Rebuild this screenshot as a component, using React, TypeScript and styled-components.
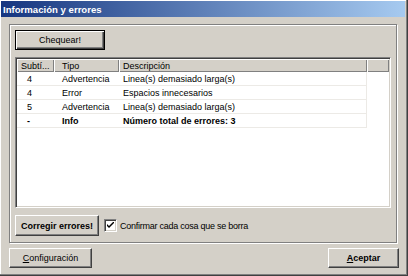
import React from 'react';
import styled, { createGlobalStyle } from 'styled-components';

const Global = createGlobalStyle`
  html, body { margin: 0; padding: 0; background: #d4d0c8; }
  body { font-family: "Liberation Sans", Arial, sans-serif; font-size: 9px; color: #000; }
  * { box-sizing: border-box; }
`;

const Window = styled.div`
  width: 408px;
  height: 276px;
  background: #d4d0c8;
  border-right: 1px solid #404040;
  border-bottom: 1px solid #404040;
  box-shadow: inset -1px -1px 0 #808080, inset 1px 1px 0 #ffffff;
  padding: 1px 2px 2px 1px;
  display: flex;
  flex-direction: column;
`;

const TitleBar = styled.div`
  height: 16px;
  background: linear-gradient(to right, #163680, #a6caf0);
  color: #fff;
  font-weight: bold;
  font-size: 9.6px;
  display: flex;
  align-items: center;
  padding-left: 2px;
`;

const Content = styled.div`
  padding: 7px 6px 0 8px;
  display: flex;
  flex-direction: column;
`;

const GroupBox = styled.div`
  width: 388px;
  border: 1px solid #808080;
  box-shadow: inset 1px 1px 0 #fff, 1px 1px 0 #fff;
  padding: 5px 6px 6px 5px;
  display: flex;
  flex-direction: column;
  gap: 7px;
`;

const Button = styled.button<{ $w: number; $h?: number; $bold?: boolean; $default?: boolean }>`
  width: ${p => p.$w}px;
  height: ${p => p.$h ?? 20}px;
  background: #d4d0c8;
  font-family: "Liberation Sans", Arial, sans-serif;
  font-size: 9px;
  font-weight: ${p => (p.$bold ? 'bold' : 'normal')};
  color: #000;
  padding: 0;
  margin: 0;
  border: 1px solid;
  border-color: ${p => (p.$default ? '#000' : '#fff #404040 #404040 #fff')};
  box-shadow: ${p =>
    p.$default
      ? 'inset 1px 1px 0 #fff, inset -1px -1px 0 #404040, inset -2px -2px 0 #808080'
      : 'inset -1px -1px 0 #808080'};
  display: flex;
  align-items: center;
  justify-content: center;
  flex-shrink: 0;
`;

const Key = styled.span`
  text-decoration: underline;
`;

const List = styled.div`
  width: 376px;
  height: 151px;
  background: #fff;
  border: 1px solid;
  border-color: #808080 #fff #fff #808080;
  box-shadow: inset 1px 1px 0 #404040, inset -1px -1px 0 #d4d0c8;
  padding: 1px;
  display: flex;
  flex-direction: column;
`;

const Header = styled.div`
  display: grid;
  grid-template-columns: 37px 65px 248px 1fr;
  height: 13px;
  background: #d4d0c8;
`;

const HeadCell = styled.div<{ $pad?: number }>`
  box-shadow: inset 1px 1px 0 #fff, inset -1px -1px 0 #808080;
  padding-left: ${p => p.$pad ?? 4}px;
  display: flex;
  align-items: center;
  white-space: nowrap;
  overflow: hidden;
`;

const Row = styled.div<{ $bold?: boolean }>`
  display: grid;
  grid-template-columns: 37px 65px 248px;
  width: 350px;
  height: 14px;
  border-bottom: 1px solid #eceae6;
  border-right: 1px solid #eceae6;
  font-weight: ${p => (p.$bold ? 'bold' : 'normal')};
`;

const Cell = styled.div<{ $pad?: number }>`
  padding-left: ${p => p.$pad ?? 4}px;
  padding-top: 1px;
  display: flex;
  align-items: center;
  white-space: nowrap;
  overflow: hidden;
`;

const BottomRow = styled.div`
  display: flex;
  align-items: center;
  height: 21px;
`;

const CheckLabel = styled.label`
  display: flex;
  align-items: center;
  margin-left: 5px;
  gap: 3px;
  letter-spacing: -0.25px;
`;

const CheckBox = styled.span`
  width: 13px;
  height: 13px;
  background: #fff;
  border: 1px solid;
  border-color: #808080 #fff #fff #808080;
  box-shadow: inset 1px 1px 0 #404040, inset -1px -1px 0 #d4d0c8;
  display: flex;
  align-items: center;
  justify-content: center;
`;

const Footer = styled.div`
  display: flex;
  justify-content: space-between;
  margin-top: 5px;
  width: 390px;
`;

const rows = [
  { n: '4', t: 'Advertencia', d: 'Linea(s) demasiado larga(s)' },
  { n: '4', t: 'Error', d: 'Espacios innecesarios' },
  { n: '5', t: 'Advertencia', d: 'Linea(s) demasiado larga(s)' },
  { n: '-', t: 'Info', d: 'Número total de errores: 3', bold: true },
];

export default function App() {
  return (
    <>
      <Global />
      <Window>
        <TitleBar>Información y errores</TitleBar>
        <Content>
          <GroupBox>
            <Button $w={90} $default>Chequear!</Button>
            <List>
              <Header>
                <HeadCell>Subtí...</HeadCell>
                <HeadCell $pad={8}>Tipo</HeadCell>
                <HeadCell>Descripción</HeadCell>
                <HeadCell />
              </Header>
              {rows.map((r, i) => (
                <Row key={i} $bold={r.bold}>
                  <Cell $pad={10}>{r.n}</Cell>
                  <Cell $pad={8}>{r.t}</Cell>
                  <Cell>{r.d}</Cell>
                </Row>
              ))}
            </List>
            <BottomRow>
              <Button $w={84} $h={21} $bold>Corregir errores!</Button>
              <CheckLabel>
                <CheckBox>
                  <svg width="7" height="7" viewBox="0 0 7 7">
                    <path d="M0 2 L0 4 L2 6 L7 1 L7 -1 L2 4 Z" fill="#000" />
                  </svg>
                </CheckBox>
                Confirmar cada cosa que se borra
              </CheckLabel>
            </BottomRow>
          </GroupBox>
          <Footer>
            <Button $w={83}><Key>C</Key>onfiguración</Button>
            <Button $w={71} $bold><Key>A</Key>ceptar</Button>
          </Footer>
        </Content>
      </Window>
    </>
  );
}
